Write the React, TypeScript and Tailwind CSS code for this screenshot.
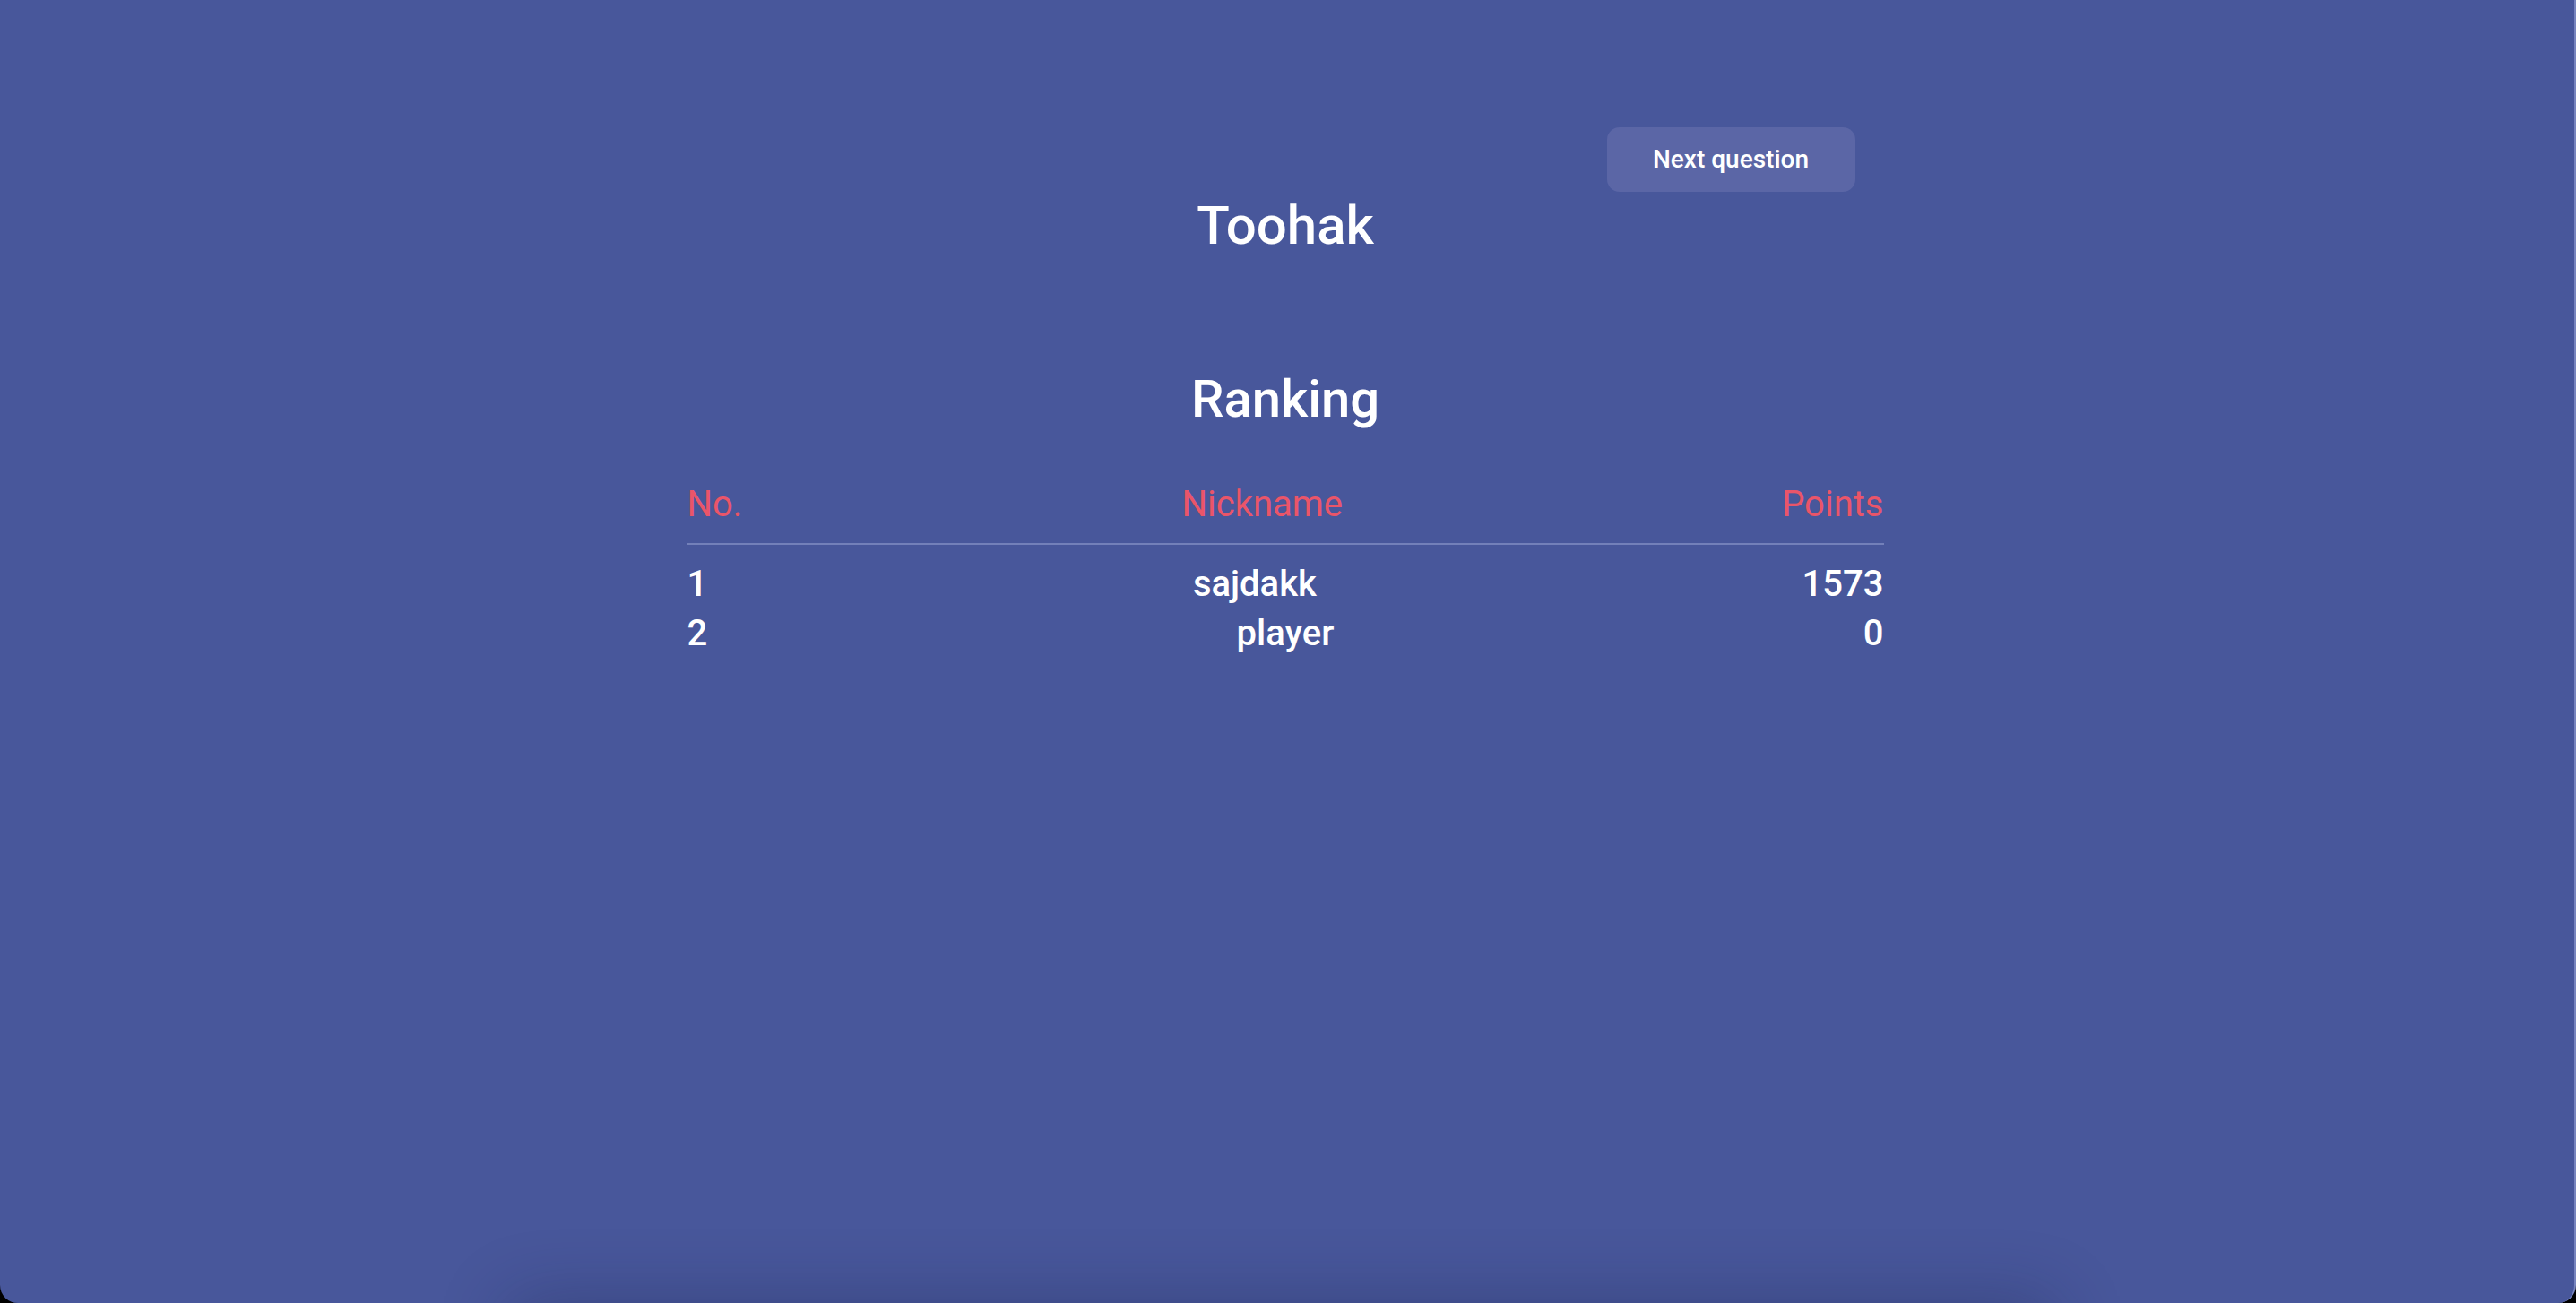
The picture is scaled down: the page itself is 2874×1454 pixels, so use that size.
import React from 'react';

const rows = [
  { no: 1, name: 'sajdakk', points: 1573 },
  { no: 2, name: 'player', points: 0 },
];

export default function App() {
  return (
    <div className="h-screen w-full bg-black flex overflow-hidden" style={{ fontFamily: 'Roboto, "Liberation Sans", sans-serif' }}>
      <div className="flex-1 flex flex-col bg-[#48579b] rounded-b-[20px] border-r-2 border-[#7784be] text-white">
        <main className="w-[1335px] mx-auto -translate-x-[2px] flex flex-col flex-1">
          <div className="flex justify-end pt-[142px] pr-[32px]">
            <button className="w-[277px] h-[72px] rounded-[14px] bg-[#5b66a6] text-[28px] font-medium text-white">
              Next question
            </button>
          </div>
          <h1 className="mt-[3px] text-center text-[60px] leading-[70px] font-medium">Toohak</h1>

          <h2 className="mt-[124px] text-center text-[58px] leading-[68px] font-medium">Ranking</h2>

          <div className="mt-[60px] flex justify-between text-[40px] leading-[47px] text-[#ea5569] pb-[20px] border-b-2 border-[#7380b9]">
            <span>No.</span>
            <span>Nickname</span>
            <span>Points</span>
          </div>
          <div className="pt-[16px]">
            {rows.map((r) => (
              <div key={r.no} className="flex justify-between text-[40px] leading-[55px] font-medium">
                <span>{r.no}</span>
                <span>{r.name}</span>
                <span>{r.points}</span>
              </div>
            ))}
          </div>
        </main>
        {/* shadow of the card sitting below the fold */}
        <div className="shrink-0 mx-auto -translate-x-[6px] w-[1720px] h-[100px] -mb-[100px] shadow-[0_0_80px_0_rgba(20,25,60,0.3)]" />
      </div>
    </div>
  );
}
